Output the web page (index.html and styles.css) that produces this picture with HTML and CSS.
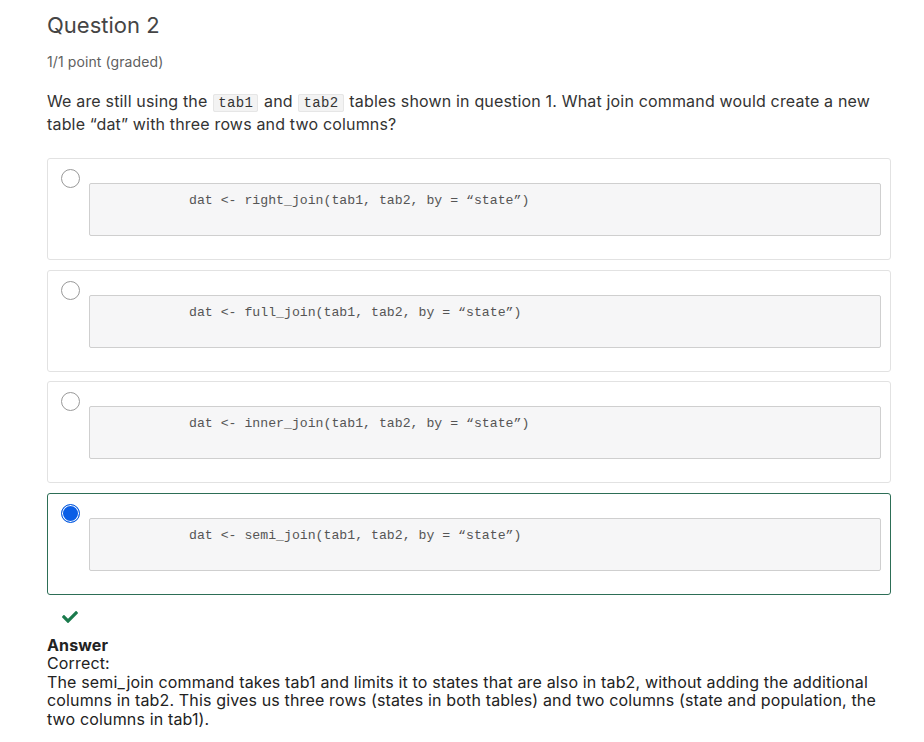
FILE: index.html
```html
<!DOCTYPE html>
<html lang="en">
<head>
<meta charset="utf-8">
<title>Question 2</title>
<link rel="stylesheet" href="styles.css">
</head>
<body>
<div class="problem">
  <h3 class="title">Question 2</h3>
  <div class="points">1/1 point (graded)</div>
  <p class="prompt">We are still using the <code class="inline">tab1</code> and <code class="inline">tab2</code> tables shown in question 1. What join command would create a new table “dat” with three rows and two columns?</p>

  <div class="choices">
    <label class="choice">
      <span class="radio"></span>
      <div class="codebox"><pre>dat &lt;- right_join(tab1, tab2, by = “state”)</pre></div>
    </label>
    <label class="choice">
      <span class="radio"></span>
      <div class="codebox"><pre>dat &lt;- full_join(tab1, tab2, by = “state”)</pre></div>
    </label>
    <label class="choice">
      <span class="radio"></span>
      <div class="codebox"><pre>dat &lt;- inner_join(tab1, tab2, by = “state”)</pre></div>
    </label>
    <label class="choice selected">
      <span class="radio checked"></span>
      <div class="codebox"><pre>dat &lt;- semi_join(tab1, tab2, by = “state”)</pre></div>
    </label>
  </div>

  <div class="status">
    <svg class="check" viewBox="0 65 512 382" width="16" height="12" aria-hidden="true"><path fill="#1a7a4c" d="M173.898 439.404l-166.4-166.4c-9.997-9.997-9.997-26.206 0-36.204l36.203-36.204c9.997-9.998 26.207-9.998 36.204 0L192 312.69 432.095 72.596c9.997-9.997 26.207-9.997 36.204 0l36.203 36.204c9.997 9.997 9.997 26.206 0 36.204l-294.4 294.401c-9.998 9.997-26.207 9.997-36.204-.001z"/></svg>
  </div>

  <div class="answer">
    <div class="answer-title">Answer</div>
    <div>Correct:</div>
    <div>The semi_join command takes tab1 and limits it to states that are also in tab2, without adding the additional columns in tab2. This gives us three rows (states in both tables) and two columns (state and population, the two columns in tab1).</div>
  </div>
</div>
</body>
</html>
```

FILE: styles.css
```css
* { box-sizing: border-box; }

html, body {
  margin: 0;
  padding: 0;
  background: #fff;
}

body {
  font-family: Inter, "Noto Sans", sans-serif;
  color: #414141;
}

.problem {
  width: 844px;
  margin-left: 47px;
  padding-top: 11px;
}

.title {
  margin: 0;
  font-size: 22px;
  line-height: 28px;
  font-weight: 400;
  color: #454545;
}

.points {
  margin-top: 14px;
  font-size: 14px;
  line-height: 18px;
  color: #5f5f5f;
  letter-spacing: 0.1px;
}

.prompt {
  margin: 19px 0 0 0;
  font-size: 16px;
  line-height: 23px;
  color: #333;
  letter-spacing: 0.17px;
}

.inline {
  font-family: "Courier New", "Liberation Mono", monospace;
  font-size: 14px;
  line-height: 1;
  letter-spacing: 0.4px;
  background: #f3f3f3;
  border: 1px solid #e6e6e6;
  border-radius: 2px;
  padding: 0 4px;
  margin: 0 1px;
}

.choices {
  margin-top: 22px;
  display: flex;
  flex-direction: column;
  gap: 9.7px;
}

.choice {
  display: flex;
  align-items: flex-start;
  border: 1px solid #e2e2e2;
  border-radius: 3px;
  padding: 10px 9px 23px 13px;
  height: 102px;
}

.choice.selected {
  border-color: #2d6e56;
}

.radio {
  flex: none;
  width: 19px;
  height: 19px;
  border-radius: 50%;
  border: 1px solid #999;
  background: #fff;
  margin-right: 9px;
}

.radio.checked {
  border: 1px solid #0d5fe0;
  background: #0a5ee6;
  box-shadow: inset 0 0 0 1px #fff;
}

.codebox {
  flex: 1;
  margin-top: 14px;
  height: 53px;
  background: #f6f6f7;
  border: 1px solid #cfcfcf;
  border-radius: 2px;
  padding: 9px 0 0 99px;
}

.codebox pre {
  margin: 0;
  font-family: "Courier New", "Liberation Mono", monospace;
  font-size: 13.2px;
  line-height: 15px;
  color: #555;
}

.status {
  margin-top: 16px;
  padding-left: 15px;
  height: 12px;
  display: flex;
}

.answer {
  margin-top: 13px;
  font-size: 16px;
  line-height: 18.4px;
  color: #222;
  letter-spacing: 0.15px;
}

.answer-title {
  font-weight: 700;
}
```
